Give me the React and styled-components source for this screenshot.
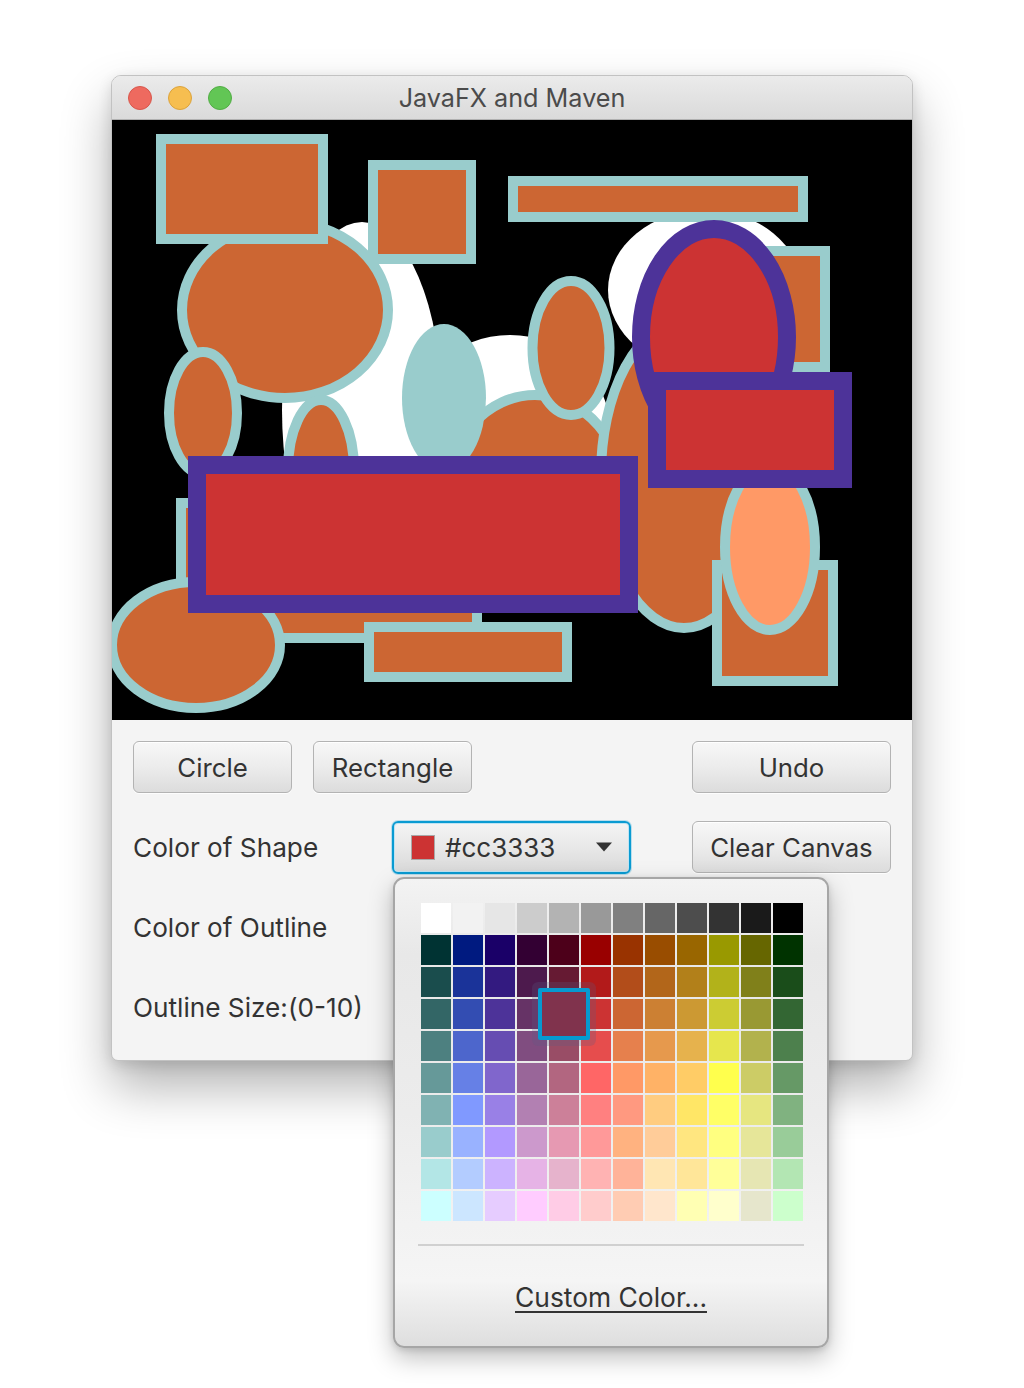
import React from 'react';
import styled, { createGlobalStyle } from 'styled-components';

const GlobalStyle = createGlobalStyle`
  html, body { margin: 0; padding: 0; background: #ffffff; }
  body { font-family: Inter, "Liberation Sans", Arial, sans-serif; color: #333333; }
  * { box-sizing: border-box; }
`;

const Page = styled.div`
  width: 1024px;
  height: 1388px;
  padding: 75px 0 0 111px;
  overflow: hidden;
`;

const Window = styled.div`
  width: 802px;
  border: 1px solid #c2c2c2;
  border-radius: 10px 10px 7px 7px;
  background: #f4f4f4;
  box-shadow: 0 26px 50px rgba(0, 0, 0, 0.3), 0 4px 14px rgba(0, 0, 0, 0.12);
`;

const TitleBar = styled.div`
  height: 44px;
  display: flex;
  align-items: center;
  position: relative;
  padding-left: 16px;
  gap: 16px;
  border-radius: 9px 9px 0 0;
  border-bottom: 1px solid #b0b0b0;
  background: linear-gradient(to bottom, #ebebeb 0%, #dadada 100%);
`;

const Light = styled.span`
  width: 24px;
  height: 24px;
  border-radius: 50%;
  background: ${(p) => p.$fill};
  border: 1px solid ${(p) => p.$edge};
  flex: none;
`;

const Title = styled.div`
  position: absolute;
  left: 0;
  right: 0;
  top: 0;
  bottom: 0;
  display: flex;
  align-items: center;
  justify-content: center;
  font-size: 25.2px;
  color: #4b4b4b;
  pointer-events: none;
`;

const Canvas = styled.svg`
  display: block;
  width: 800px;
  height: 600px;
  background: #000000;
`;

const Panel = styled.div`
  height: 340px;
  padding: 21px 21px 0 21px;
  display: flex;
  flex-direction: column;
  gap: 28px;
  border-radius: 0 0 7px 7px;
`;

const Row = styled.div`
  height: 52px;
  display: flex;
  align-items: center;
`;

const Button = styled.button`
  width: ${(p) => p.$w}px;
  height: 52px;
  margin-left: ${(p) => (p.$push ? 'auto' : `${p.$ml || 0}px`)};
  border: 1px solid #b3b3b3;
  border-radius: 6px;
  background: linear-gradient(to bottom, #f7f7f7 0%, #ececec 50%, #dcdcdc 100%);
  box-shadow: inset 0 1px 0 rgba(255, 255, 255, 0.9), 0 1px 0 rgba(255, 255, 255, 0.8);
  font-family: inherit;
  font-size: 25.8px;
  color: #333333;
  padding: 0;
`;

const Label = styled.div`
  width: ${(p) => p.$w}px;
  font-size: 26.2px;
  color: #333333;
  white-space: nowrap;
`;

const PickerWrap = styled.div`
  position: relative;
  width: 239px;
  height: 53px;
`;

const Picker = styled.div`
  width: 100%;
  height: 100%;
  border: 2px solid #0a9bd2;
  border-radius: 6px;
  box-shadow: 0 0 0 1px rgba(10, 155, 210, 0.25), inset 0 0 0 1px #bfe4f3;
  background: linear-gradient(to bottom, #f4f4f4 0%, #e8e8e8 50%, #d9d9d9 100%);
  display: flex;
  align-items: center;
  padding-left: 17px;
`;

const Swatch = styled.span`
  width: 24px;
  height: 25px;
  background: #cc3333;
  border: 1px solid #a9a9a9;
  flex: none;
`;

const PickerText = styled.span`
  margin-left: 10px;
  font-size: 26px;
  color: #333333;
  flex: 1;
`;

const Arrow = styled.svg`
  width: 18px;
  height: 10px;
  margin-right: 16px;
  flex: none;
`;

const Popup = styled.div`
  position: absolute;
  top: 56px;
  left: 1px;
  width: 436px;
  height: 471px;
  border: 2px solid #a6a6a6;
  border-radius: 11px;
  background: linear-gradient(to bottom, #f3f3f3 0%, #e8e8e8 16%, #ececec 50%, #f5f5f5 86%, #dedede 100%);
  box-shadow: 0 10px 24px rgba(0, 0, 0, 0.25), 0 2px 6px rgba(0, 0, 0, 0.12);
  display: flex;
  flex-direction: column;
  z-index: 5;
`;

const Palette = styled.div`
  margin: 24px 0 0 26px;
  display: grid;
  grid-template-columns: repeat(12, 30px);
  grid-auto-rows: 30px;
  gap: 2px;
  position: relative;
`;

const Cell = styled.span`
  display: block;
  background: ${(p) => p.$c};
`;

const Hover = styled.span`
  position: absolute;
  left: ${(p) => p.$x - 11}px;
  top: ${(p) => p.$y - 11}px;
  width: 52px;
  height: 52px;
  background: ${(p) => p.$c};
  border: 4px solid #069ad0;
  box-shadow: 0 0 0 6px rgba(90, 90, 130, 0.25);
  border-radius: 2px;
`;

const Separator = styled.div`
  margin: 23px 0 0 23px;
  width: 386px;
  height: 2px;
  background: #d0d0d0;
`;

const CustomLink = styled.div`
  flex: 1;
  display: flex;
  align-items: center;
  justify-content: center;
  padding-top: 2px;
  font-size: 26.4px;
  color: #333333;
  text-decoration: underline;
  text-decoration-thickness: 2px;
  text-underline-offset: 4px;
`;

const RAW = [
  255,255,255, 242,242,242, 230,230,230, 204,204,204, 179,179,179, 153,153,153, 128,128,128, 102,102,102, 77,77,77, 51,51,51, 26,26,26, 0,0,0,
  0,51,51, 0,26,128, 26,0,104, 51,0,51, 77,0,26, 153,0,0, 153,51,0, 153,77,0, 153,102,0, 153,153,0, 102,102,0, 0,51,0,
  26,77,77, 26,51,153, 51,26,128, 77,26,77, 102,26,51, 178,26,26, 178,77,26, 178,102,26, 178,128,26, 178,178,26, 128,128,26, 26,77,26,
  51,102,102, 51,77,178, 77,51,153, 102,51,102, 128,51,77, 204,51,51, 204,102,51, 204,128,51, 204,153,51, 204,204,51, 153,153,51, 51,102,51,
  77,128,128, 77,102,204, 102,77,178, 128,77,128, 153,77,102, 230,77,77, 230,128,77, 230,153,77, 230,178,77, 230,230,77, 178,178,77, 77,128,77,
  102,153,153, 102,128,230, 128,102,204, 153,102,153, 178,102,128, 255,102,102, 255,153,102, 255,178,102, 255,204,102, 255,255,77, 204,204,102, 102,153,102,
  128,178,178, 128,153,255, 153,128,230, 178,128,178, 204,128,153, 255,128,128, 255,153,128, 255,204,128, 255,230,102, 255,255,102, 230,230,128, 128,178,128,
  153,204,204, 153,178,255, 178,153,255, 204,153,204, 230,153,178, 255,153,153, 255,178,128, 255,204,153, 255,230,128, 255,255,128, 230,230,153, 153,204,153,
  179,230,230, 179,204,255, 204,179,255, 230,179,230, 230,179,204, 255,179,179, 255,179,153, 255,230,179, 255,230,153, 255,255,153, 230,230,179, 179,230,179,
  204,255,255, 204,230,255, 230,204,255, 255,204,255, 255,204,230, 255,204,204, 255,204,179, 255,230,204, 255,255,179, 255,255,204, 230,230,204, 204,255,204,
];

const COLORS = [];
for (let i = 0; i < RAW.length; i += 3) {
  COLORS.push(`rgb(${RAW[i]}, ${RAW[i + 1]}, ${RAW[i + 2]})`);
}

const ORANGE = '#cc6633';
const TEAL = '#99cccc';
const RED = '#cc3333';
const PURPLE = '#4d3399';

const R = ({ b, fill = ORANGE, stroke = TEAL, sw = 10 }) => (
  <rect
    x={b[0] + sw / 2}
    y={b[1] + sw / 2}
    width={b[2] - b[0] - sw}
    height={b[3] - b[1] - sw}
    fill={fill}
    stroke={stroke}
    strokeWidth={sw}
  />
);

const E = ({ b, fill = ORANGE, stroke = TEAL, sw = 10 }) => (
  <ellipse
    cx={b[0]}
    cy={b[1]}
    rx={b[2] - sw / 2}
    ry={b[3] - sw / 2}
    fill={fill}
    stroke={stroke}
    strokeWidth={sw}
  />
);

const W = ({ b }) => <ellipse cx={b[0]} cy={b[1]} rx={b[2]} ry={b[3]} fill="#ffffff" />;

function Drawing() {
  return (
    <Canvas viewBox="0 0 800 600">
      <g transform="translate(-112 -120)">
        <W b={[362, 410, 80, 188]} />
        <W b={[510, 430, 100, 95]} />
        <W b={[705, 290, 97, 80]} />
        <E b={[285, 310, 108, 93]} />
        <R b={[156, 134, 328, 244]} />
        <R b={[368, 160, 476, 264]} />
        <E b={[203, 413, 39, 66]} />
        <E b={[321, 470, 38, 75]} />
        <R b={[508, 176, 808, 222]} />
        <E b={[535, 500, 95, 110]} />
        <ellipse cx={444} cy={398} rx={42} ry={74} fill={TEAL} />
        <E b={[571, 348, 43.5, 72]} />
        <E b={[684, 475, 88, 158]} />
        <R b={[700, 246, 830, 372]} />
        <E b={[714, 337, 82, 117]} fill={RED} stroke={PURPLE} sw={18} />
        <R b={[176, 498, 482, 643]} />
        <E b={[196, 645, 89, 68]} />
        <R b={[364, 622, 572, 682]} />
        <R b={[712, 560, 838, 686]} />
        <E b={[770, 547, 50, 88]} fill="#ff9966" />
        <R b={[648, 372, 852, 488]} fill={RED} stroke={PURPLE} sw={18} />
        <R b={[188, 456, 638, 613]} fill={RED} stroke={PURPLE} sw={18} />
      </g>
    </Canvas>
  );
}

export default function App() {
  const hoverIdx = 3 * 12 + 4;
  const hx = (hoverIdx % 12) * 32;
  const hy = Math.floor(hoverIdx / 12) * 32;
  return (
    <>
      <GlobalStyle />
      <Page>
        <Window>
          <TitleBar>
            <Light $fill="#ee6a5f" $edge="#d8574c" />
            <Light $fill="#f6be50" $edge="#dca33c" />
            <Light $fill="#62c655" $edge="#52ad45" />
            <Title>JavaFX and Maven</Title>
          </TitleBar>
          <Drawing />
          <Panel>
            <Row>
              <Button $w={159}>Circle</Button>
              <Button $w={159} $ml={21}>Rectangle</Button>
              <Button $w={199} $push>Undo</Button>
            </Row>
            <Row>
              <Label $w={259}>Color of Shape</Label>
              <PickerWrap>
                <Picker>
                  <Swatch />
                  <PickerText>#cc3333</PickerText>
                  <Arrow viewBox="0 0 18 10">
                    <path d="M1 0.5 H17 L9 9.5 Z" fill="#333333" />
                  </Arrow>
                </Picker>
                <Popup>
                  <Palette>
                    {COLORS.map((c, i) => (
                      <Cell key={i} $c={c} />
                    ))}
                    <Hover $x={hx} $y={hy} $c={COLORS[hoverIdx]} />
                  </Palette>
                  <Separator />
                  <CustomLink>Custom Color...</CustomLink>
                </Popup>
              </PickerWrap>
              <Button $w={199} $push>Clear Canvas</Button>
            </Row>
            <Row>
              <Label $w={259}>Color of Outline</Label>
            </Row>
            <Row>
              <Label $w={259}>Outline Size:(0-10)</Label>
            </Row>
          </Panel>
        </Window>
      </Page>
    </>
  );
}
